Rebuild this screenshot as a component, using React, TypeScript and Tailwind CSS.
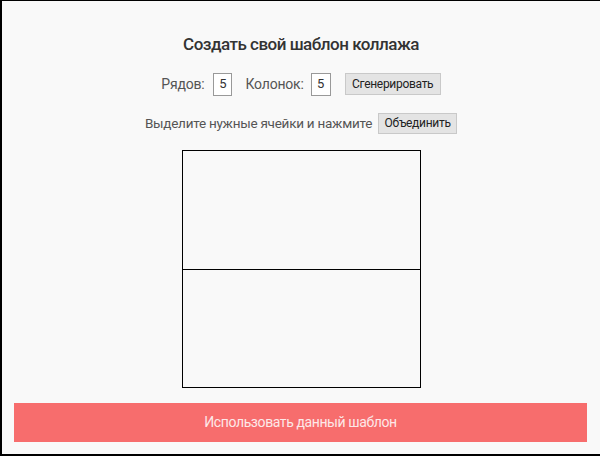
export default function App() {
  const font = { fontFamily: '"Roboto", "Liberation Sans", sans-serif' };
  return (
    <div className="w-[600px] h-[456px] bg-[#f9f9f9] border-l-2 border-b-2 border-t border-black flex flex-col items-center" style={font}>
      <h1 className="mt-[32px] h-[22px] leading-[22px] text-[17px] font-medium tracking-[-0.5px] text-[#333]">Создать свой шаблон коллажа</h1>
      <div className="mt-[17px] flex items-center h-[24px] text-[14px] text-[#555]">
        <span className="tracking-[-0.2px]">Рядов:</span>
        <div className="ml-[9px] w-[19px] h-[23px] border border-[#999] bg-white flex items-center justify-center text-[13px] text-[#333]">5</div>
        <span className="ml-[13px] tracking-[-0.2px]">Колонок:</span>
        <div className="ml-[7px] w-[20px] h-[23px] border border-[#999] bg-white flex items-center justify-center text-[13px] text-[#333]">5</div>
        <button className="ml-[14px] w-[96px] h-[22px] bg-[#e4e4e4] border border-[#c9c9c9] text-[12px] tracking-[-0.3px] text-[#222]">Сгенерировать</button>
      </div>
      <div className="mt-[16px] flex items-center h-[22px] text-[13.5px] text-[#555]">
        <span className="tracking-[-0.25px]">Выделите нужные ячейки и нажмите</span>
        <button className="ml-[6px] w-[79px] h-[21px] bg-[#e4e4e4] border border-[#c9c9c9] text-[12px] tracking-[-0.3px] text-[#222]">Объединить</button>
      </div>
      <div className="mt-[16px] w-[239px] h-[238px] border border-black flex flex-col">
        <div className="flex-1 border-b border-black"></div>
        <div className="flex-1"></div>
      </div>
      <button className="mt-[15px] w-[573px] h-[39px] bg-[#f76d6d] text-[#fde8e8] text-[14px] tracking-[-0.4px] self-start ml-[12px]">Использовать данный шаблон</button>
    </div>
  );
}
